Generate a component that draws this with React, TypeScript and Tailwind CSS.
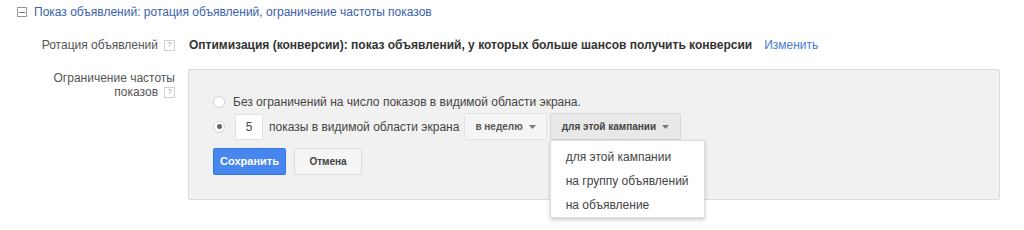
import React from "react";

const Help = () => (
  <span className="inline-flex items-center justify-center w-[11px] h-[11px] border border-[#cfcfcf] text-[8px] leading-none text-[#9a9a9a] bg-white align-middle">?</span>
);

const Caret = () => (
  <svg width="7" height="4" viewBox="0 0 7 4" className="ml-[6px]"><path d="M0 0h7L3.5 4z" fill="#777" /></svg>
);

export default function App() {
  return (
    <div className="w-[1024px] h-[230px] bg-white text-[12px] text-[#444] overflow-hidden" style={{ fontFamily: '"Liberation Sans", Arial, sans-serif' }}>
      <div className="flex items-center pl-[17px] pt-[5px] h-[19px] gap-[7px] text-[#3b62ad]">
        <span className="w-[10px] h-[10px] border border-[#999] flex items-center justify-center">
          <span className="w-[6px] h-[1px] bg-[#777]" />
        </span>
        <span>Показ объявлений: ротация объявлений, ограничение частоты показов</span>
      </div>

      <div className="flex items-center mt-[19px] h-[14px]">
        <div className="w-[175px] flex justify-end items-center gap-[6px] text-[#555]">
          <span>Ротация объявлений</span>
          <Help />
        </div>
        <div className="ml-[14px] flex items-center">
          <span className="font-bold text-[#333]">Оптимизация (конверсии): показ объявлений, у которых больше шансов получить конверсии</span>
          <span className="ml-[12px] text-[#4a7bd0]">Изменить</span>
        </div>
      </div>

      <div className="flex mt-[17px]">
        <div className="w-[175px] text-right text-[#555] leading-[14px] pt-[2px]">
          <div>Ограничение частоты</div>
          <div className="flex justify-end items-center gap-[6px]">
            <span>показов</span>
            <Help />
          </div>
        </div>
        <div className="ml-[13px] w-[812px] h-[131px] bg-[#f1f1f1] border border-[#dcdcdc] rounded-[2px] pl-[24px] pt-[25px]">
          <div className="flex items-center h-[14px]">
            <span className="w-[12px] h-[12px] rounded-full border border-[#d0d0d0] bg-white" />
            <span className="ml-[8px]">Без ограничений на число показов в видимой области экрана.</span>
          </div>
          <div className="flex items-center mt-[4px] h-[27px]">
            <span className="w-[12px] h-[12px] rounded-full border border-[#d0d0d0] bg-white flex items-center justify-center">
              <span className="w-[5px] h-[5px] rounded-full bg-[#666]" />
            </span>
            <span className="ml-[10px] w-[28px] h-[26px] bg-white border border-[#e2e2e2] flex items-center justify-center">5</span>
            <span className="ml-[6px]">показы в видимой области экрана</span>
            <span className="ml-[5px] h-[27px] px-[10px] flex items-center border border-[#e4e4e4] bg-[#f5f5f5] rounded-[2px] font-bold text-[10px] text-[#555]">
              в неделю<Caret />
            </span>
            <div className="relative ml-[3px]">
              <span className="h-[27px] px-[11px] flex items-center border border-[#d6d6d6] bg-[#e8e8e8] rounded-[2px] font-bold text-[10px] text-[#444]">
                для этой кампании<Caret />
              </span>
              <div className="absolute left-0 top-[27px] w-[155px] bg-white border border-[#ddd] shadow-[0_2px_4px_rgba(0,0,0,0.2)] pt-[4px] text-[#444] z-10">
                <div className="h-[24px] flex items-center pl-[15px]">для этой кампании</div>
                <div className="h-[24px] flex items-center pl-[15px]">на группу объявлений</div>
                <div className="h-[24px] flex items-center pl-[15px]">на объявление</div>
              </div>
            </div>
          </div>
          <div className="flex items-center mt-[8px] gap-[8px]">
            <span className="h-[27px] w-[73px] flex items-center justify-center bg-[#4787ed] border border-[#3079ed] rounded-[2px] text-white font-bold text-[11px]">Сохранить</span>
            <span className="h-[27px] w-[68px] flex items-center justify-center bg-[#f5f5f5] border border-[#dcdcdc] rounded-[2px] text-[#444] font-bold text-[10px]">Отмена</span>
          </div>
        </div>
      </div>
    </div>
  );
}
